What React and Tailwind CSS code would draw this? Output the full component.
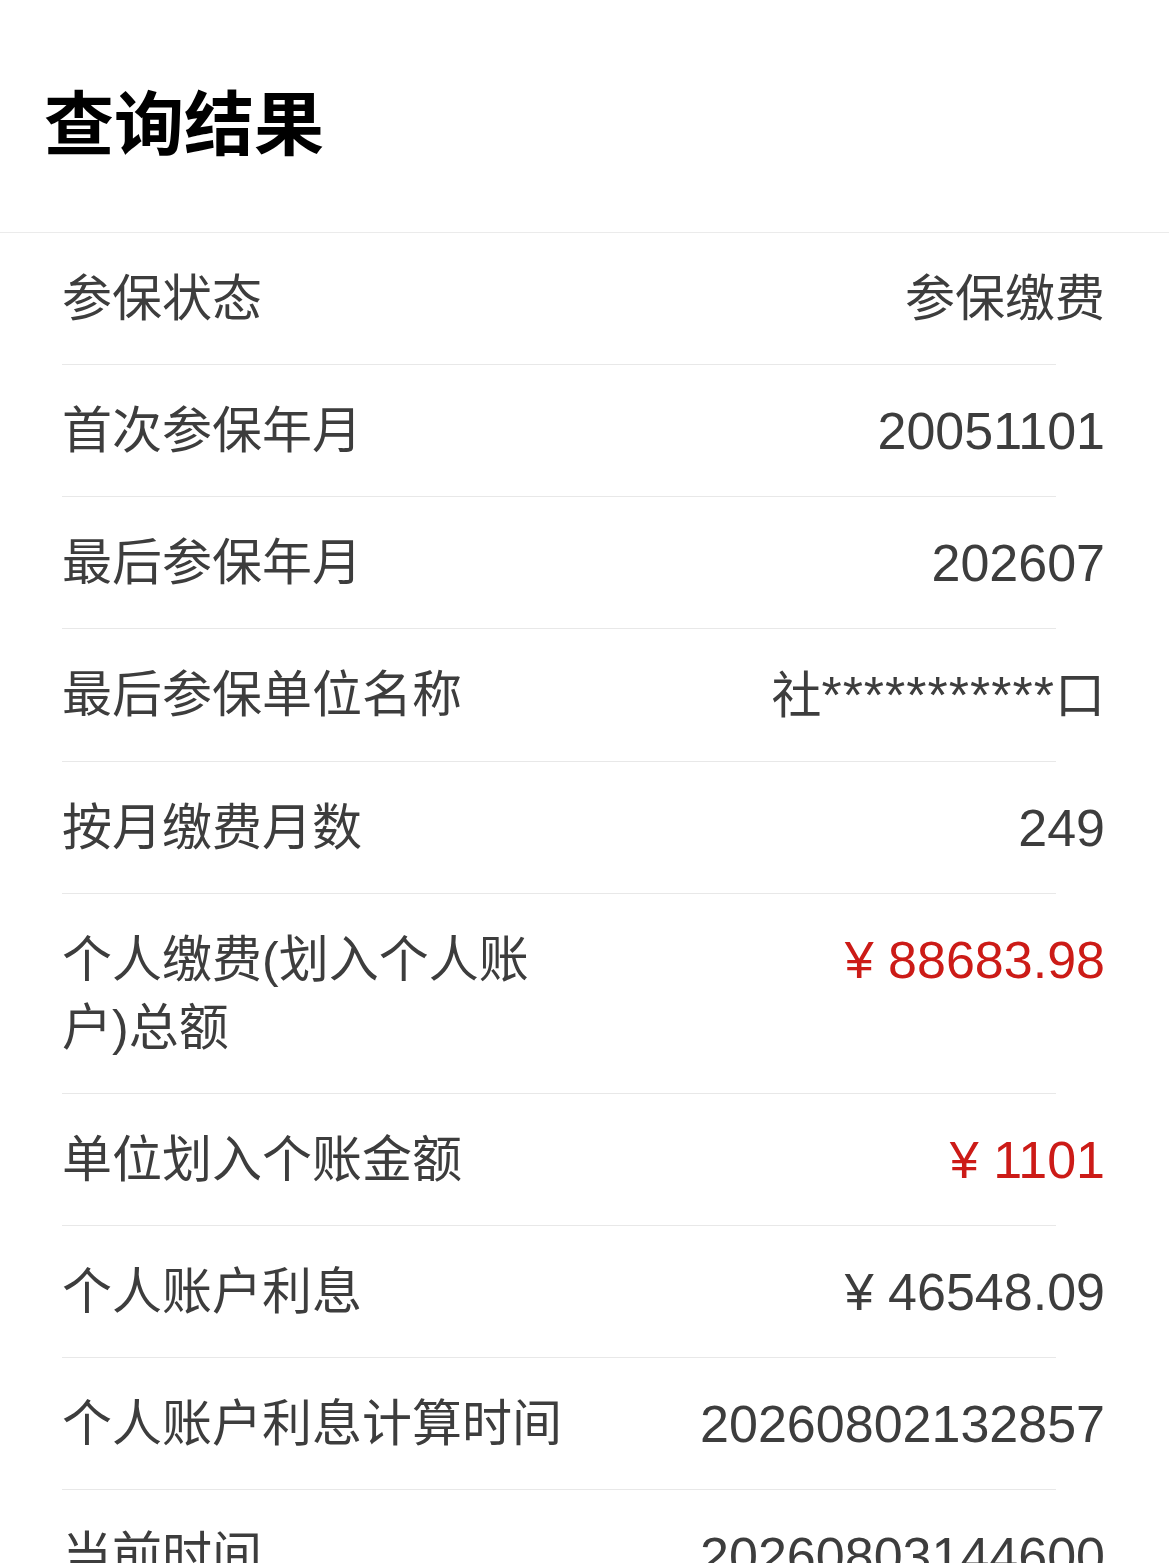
const rows = [
  { label: '参保状态', value: '参保缴费', cjk: true },
  { label: '首次参保年月', value: '20051101' },
  { label: '最后参保年月', value: '202607' },
  { label: '最后参保单位名称', value: '社', stars: '***********', tail: '口', cjk: true },
  { label: '按月缴费月数', value: '249' },
  { label: '个人缴费(划入个人账户)总额', value: '¥ 88683.98', red: true },
  { label: '单位划入个账金额', value: '¥ 1101', red: true },
  { label: '个人账户利息', value: '¥ 46548.09' },
  { label: '个人账户利息计算时间', value: '20260802132857' },
  { label: '当前时间', value: '20260803144600' },
];

function Row({ label, value, stars, tail, red, cjk }) {
  const color = red ? 'text-[#cc1b17]' : 'text-[#3d3d3d]';
  return (
    <div className="pl-[62px]">
      <div className="flex items-start justify-between pr-[64px] py-[31.5px] text-[50px] leading-[68px]">
        <span className="max-w-[510px] text-[#3d3d3d]">{label}</span>
        {cjk ? (
          <span className={`${color} whitespace-nowrap`}>
            {value}
            {stars && <span className="text-[52px] tracking-[1px]">{stars}</span>}
            {tail}
          </span>
        ) : (
          <span className={`${color} whitespace-nowrap text-[52px]`}>{value}</span>
        )}
      </div>
      <div className="h-px bg-[#e8e8e8] mr-[113px]" />
    </div>
  );
}

export default function App() {
  return (
    <div
      className="w-[1169px] h-[1563px] overflow-hidden bg-white"
      style={{ fontFamily: '"Liberation Sans", "Noto Sans CJK SC", sans-serif' }}
    >
      <header className="h-[233px] flex items-center pl-[44px] pt-[20px] border-b border-[#ebebeb]">
        <h1 className="text-[70px] font-bold text-black leading-none">查询结果</h1>
      </header>
      {rows.map((r) => (
        <Row key={r.label} {...r} />
      ))}
    </div>
  );
}
